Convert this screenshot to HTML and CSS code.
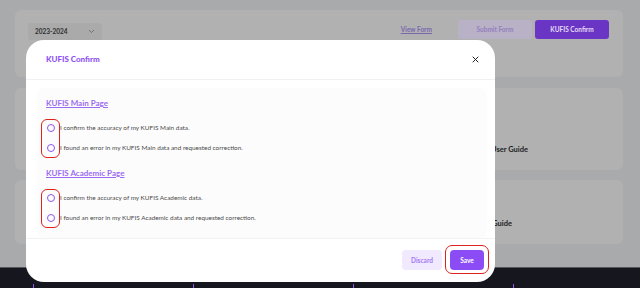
FILE: index.html
```html
<!DOCTYPE html>
<html lang="en">
<head>
  <meta charset="UTF-8" />
  <meta name="viewport" content="width=device-width, initial-scale=1.0" />
  <title>KUFIS Confirm</title>
  <link rel="stylesheet" href="styles.css">
</head>
<body>
  <!-- Page behind the modal -->
  <div class="page">
    <div class="card toolbar">
      <div class="year-select">
        <span>2023-2024</span>
        <svg width="7" height="5" viewBox="0 0 7 5"><path d="M1 1l2.5 2.5L6 1" fill="none" stroke="#6b6b6b" stroke-width="0.9"/></svg>
      </div>
      <div class="toolbar-actions">
        <a class="view-link" href="#">View Form</a>
        <button class="btn-soft-dim">Submit Form</button>
        <button class="btn-main-dim">KUFIS Confirm</button>
      </div>
    </div>

    <div class="card guide-card">
      <div class="guide guide-one">KUFIS User Guide</div>
    </div>

    <div class="card guide-card short">
      <div class="guide guide-two">KUFIS Guide</div>
    </div>
  </div>

  <footer class="site-footer">
    <span class="col-mark"></span>
    <span class="col-mark"></span>
    <span class="col-mark"></span>
    <span class="col-mark"></span>
  </footer>

  <!-- Modal -->
  <div class="modal">
    <div class="modal-header">
      <h2>KUFIS Confirm</h2>
      <button class="close-btn" aria-label="Close">
        <svg width="7" height="7" viewBox="0 0 7 7"><path d="M1 1l5 5M6 1L1 6" stroke="#222" stroke-width="1" stroke-linecap="round"/></svg>
      </button>
    </div>

    <div class="modal-body">
      <div class="section">
        <a class="page-link" href="#">KUFIS Main Page</a>
        <div class="options">
          <span class="mark"></span>
          <label class="option"><span class="radio"></span>I confirm the accuracy of my KUFIS Main data.</label>
          <label class="option"><span class="radio"></span>I found an error in my KUFIS Main data and requested correction.</label>
        </div>
      </div>

      <div class="section">
        <a class="page-link" href="#">KUFIS Academic Page</a>
        <div class="options">
          <span class="mark"></span>
          <label class="option"><span class="radio"></span>I confirm the accuracy of my KUFIS Academic data.</label>
          <label class="option"><span class="radio"></span>I found an error in my KUFIS Academic data and requested correction.</label>
        </div>
      </div>
    </div>

    <div class="modal-footer">
      <button class="btn-discard">Discard</button>
      <div class="save-wrap">
        <span class="mark save-mark"></span>
        <button class="btn-save">Save</button>
      </div>
    </div>
  </div>
</body>
</html>
```

FILE: styles.css
```css
body {
  font-family: 'Lato', 'Noto Sans', sans-serif;
  background-color: #a9aaab;
  margin: 0;
  padding: 0;
  width: 640px;
  height: 288px;
  overflow: hidden;
  position: relative;
}

.page {
  padding: 10px 17px 0 15px;
  display: flex;
  flex-direction: column;
  gap: 11px;
  height: 258px;
}

.card {
  background: #b1b1b1;
  border-radius: 6px;
}

.toolbar {
  height: 67px;
  display: flex;
  justify-content: space-between;
  align-items: flex-start;
  padding: 0 14px 0 13px;
}

.year-select {
  margin-top: 13px;
  width: 74px;
  height: 17px;
  box-sizing: border-box;
  background: #aaaaaa;
  border-radius: 3px;
  display: flex;
  align-items: center;
  justify-content: space-between;
  padding: 0 7px;
  font-size: 6.5px;
  font-weight: bold;
  color: #2e2e2e;
}

.toolbar-actions {
  margin-top: 10px;
  display: flex;
  align-items: center;
  gap: 3px;
}

.view-link {
  color: #7a68ae;
  font-size: 6.5px;
  font-weight: bold;
  margin-right: 23px;
}

.btn-soft-dim,
.btn-main-dim {
  width: 74px;
  height: 19px;
  border: none;
  border-radius: 3px;
  font-family: inherit;
  font-size: 6.5px;
  font-weight: bold;
}

.btn-soft-dim {
  background: #b9b1c6;
  color: #9380bd;
}

.btn-main-dim {
  background: #6a34c4;
  color: #e6dcf5;
}

.guide-card {
  height: 82px;
  margin-bottom: -1px;
}

.guide-card.short {
  height: 64px;
}

.guide {
  font-size: 7.5px;
  font-weight: bold;
  color: #1e1e1e;
  text-align: right;
}

.guide-one {
  width: 513px;
  margin-top: 57px;
}

.guide-two {
  width: 497px;
  margin-top: 39px;
}

.site-footer {
  position: absolute;
  left: 0;
  bottom: 0;
  width: 640px;
  height: 21px;
  background: #16161f;
  border-top: 1px solid #55565a;
  display: flex;
  padding-left: 33px;
  box-sizing: border-box;
  gap: 159px;
}

.col-mark {
  width: 1px;
  height: 4px;
  margin-top: 16px;
  background: #8a5af0;
}

/* Modal */
.modal {
  position: absolute;
  left: 26px;
  top: 40px;
  width: 469px;
  height: 242px;
  background: #fff;
  border-radius: 18px;
  display: flex;
  flex-direction: column;
}

.modal-header {
  height: 39px;
  border-bottom: 1px solid #f0f0f2;
  display: flex;
  align-items: center;
  justify-content: space-between;
  padding: 0 16px 0 20px;
}

.modal-header h2 {
  margin: 0;
  font-size: 8px;
  font-weight: 900;
  color: #9052f2;
}

.close-btn {
  background: none;
  border: none;
  padding: 0;
  display: flex;
}

.modal-body {
  margin: 8px 8px 0 11px;
  background: #fcfcfc;
  border-radius: 8px;
  padding: 10px 9px 10px 9px;
  height: 131px;
  display: flex;
  flex-direction: column;
  gap: 10px;
}

.page-link {
  display: block;
  font-size: 8px;
  font-weight: bold;
  color: #9b6cf0;
  line-height: 10px;
}

.options {
  position: relative;
  margin-top: 10px;
}

.option {
  display: flex;
  align-items: center;
  height: 20px;
  font-size: 6.4px;
  color: #4a4a4a;
  gap: 5px;
}

.radio {
  width: 6px;
  height: 6px;
  border: 1.6px solid #8c55f3;
  border-radius: 50%;
  margin-left: 1px;
}

.mark {
  position: absolute;
  border: 1.5px solid #e0221c;
  border-radius: 6px;
  box-sizing: border-box;
}

.options .mark {
  left: -5px;
  top: 1px;
  width: 19px;
  height: 39px;
}

.modal-footer {
  margin-top: auto;
  border-top: 1px solid #f2f2f4;
  display: flex;
  justify-content: flex-end;
  align-items: center;
  gap: 8px;
  height: 42px;
  padding: 0 11px 1px 0;
}

.btn-discard,
.btn-save {
  height: 20px;
  border: none;
  border-radius: 4px;
  font-family: inherit;
  font-size: 6.5px;
  font-weight: bold;
}

.btn-discard {
  width: 40px;
  background: #f1e9fe;
  color: #a47af2;
}

.save-wrap {
  position: relative;
  display: flex;
}

.btn-save {
  width: 34px;
  background: #8c4cf5;
  color: #fff;
}

.save-mark {
  left: -5px;
  top: -5px;
  width: 44px;
  height: 29px;
  border-radius: 7px;
}
```
